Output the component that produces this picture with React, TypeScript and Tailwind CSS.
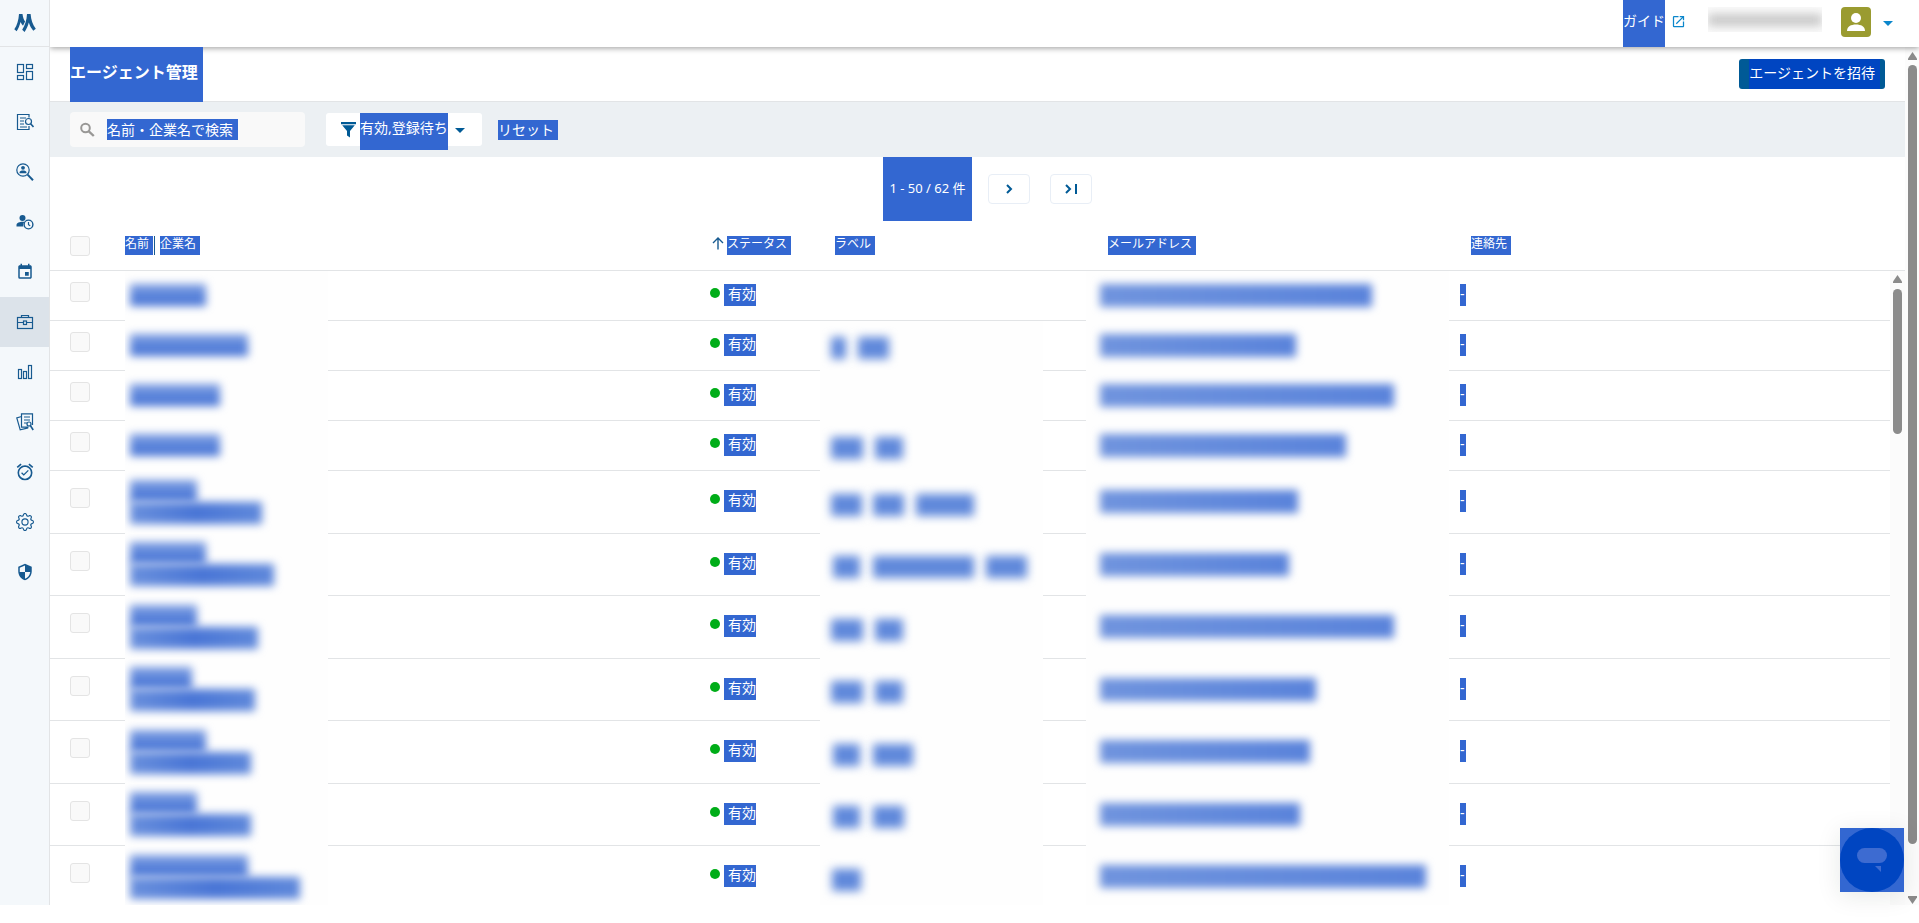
import type { ReactNode } from "react";
import {
  MdArrowDropDown,
  MdEvent,
  MdOpenInNew,
  MdOutlineAlarmOn,
  MdSecurity,
} from "react-icons/md";
import { BsGear } from "react-icons/bs";

const stroke = {
  width: 18,
  height: 18,
  viewBox: "0 0 18 18",
  fill: "none",
  stroke: "currentColor",
  strokeWidth: 1.2,
};

const LogoIcon = () => (
  <svg width="22" height="20" viewBox="0 0 22 20" fill="currentColor">
    <path d="M5 1h3.500c.4 3 1.200 5.500 2.600 7.600L9 12.800C7.900 11.600 7.200 10.400 6.600 9 5.600 12.500 4.400 15.500 2.600 18.300L.3 16.300C3 12.500 4.600 7 5 1z" />
    <path d="M13 1h3.600c.5 6 2 10.500 5.200 14.800l-2.500 2c-2.100-2.400-3.500-5-4.500-8.200-1 3.700-2.300 6.600-4.200 9.400l-2.400-2.200C11 12.500 12.700 7 13 1z" />
  </svg>
);

const DashboardIcon = () => (
  <svg {...stroke}>
    <rect x="1.500" y="1.500" width="6" height="8" />
    <rect x="10.500" y="1.500" width="6" height="4" />
    <rect x="1.500" y="12.500" width="6" height="4" />
    <rect x="10.500" y="8.500" width="6" height="8" />
  </svg>
);

const JobSearchIcon = () => (
  <svg {...stroke}>
    <path d="M13 4.500v-3H1.500v15H13v-3.500M4 5h6M4 8h4M4 11h4M4 14h7" />
    <circle cx="12.500" cy="8.500" r="3" />
    <path d="M14.600 10.800 17.500 14" strokeWidth="1.600" />
  </svg>
);

const PersonSearchIcon = () => (
  <svg {...stroke}>
    <circle cx="7" cy="7" r="6.200" />
    <circle cx="7" cy="4.800" r="1.900" fill="currentColor" stroke="none" />
    <path d="M3.500 10.200V9.500C3.500 8 5.500 7.500 7 7.500s3.500.5 3.500 2v.7z" fill="currentColor" stroke="none" />
    <path d="m11.600 11.600 5.400 5.600" strokeWidth="2" />
  </svg>
);

const PersonClockIcon = () => (
  <svg {...stroke}>
    <circle cx="6.500" cy="5" r="3" fill="currentColor" stroke="none" />
    <path d="M.5 13.500V12c0-2.300 3.500-3.300 6-3.300.8 0 1.300.1 2 .2-1.300 1.300-1.600 3-1.200 4.600z" fill="currentColor" stroke="none" />
    <circle cx="12.500" cy="11.500" r="4.400" strokeWidth="1.400" />
    <path d="M12.500 9v2.700l1.700 1" />
  </svg>
);

const BriefcaseIcon = () => (
  <svg {...stroke}>
    <rect x="1.500" y="4.500" width="15" height="11" />
    <path d="M5.500 4.500v-2h7v2M1.500 9.500h5.500M11 9.500h5.500" />
    <rect x="7.500" y="8" width="3" height="3.500" />
  </svg>
);

const ChartIcon = () => (
  <svg {...stroke}>
    <rect x="2.500" y="6.500" width="3" height="9" />
    <rect x="7.500" y="8.500" width="3" height="7" />
    <rect x="12.500" y="2.500" width="3" height="13" />
  </svg>
);

const ReportIcon = () => (
  <svg {...stroke}>
    <path d="M16.500 12V.8h-11v13.400h7M5.500 3.500.8 4.800l3.400 12 8-2M8 4h6M8 7h6M8 10h3" />
    <circle cx="13" cy="11" r="2" />
    <path d="m14.500 12.800 2.700 4.200" strokeWidth="1.600" />
  </svg>
);

const FilterIcon = () => (
  <svg width="15" height="16" viewBox="0 0 15 16" fill="currentColor">
    <path d="M0 0h15v2.200H0zM1.200 3.300h12.600L9 9v6.500l-3-2V9z" />
  </svg>
);

const SearchIcon = () => (
  <svg width="15" height="15" viewBox="0 0 15 15" fill="none" stroke="currentColor" strokeWidth="2">
    <circle cx="5.500" cy="6" r="4.300" />
    <path d="m8.800 9.300 5 4.700" strokeWidth="2.400" />
  </svg>
);

const navItems = [
  { label: "ダッシュボード", icon: <DashboardIcon /> },
  { label: "求人", icon: <JobSearchIcon /> },
  { label: "候補者検索", icon: <PersonSearchIcon /> },
  { label: "選考", icon: <PersonClockIcon /> },
  { label: "カレンダー", icon: <MdEvent size={18} /> },
  { label: "エージェント", icon: <BriefcaseIcon />, active: true },
  { label: "分析", icon: <ChartIcon /> },
  { label: "レポート", icon: <ReportIcon /> },
  { label: "リマインダー", icon: <MdOutlineAlarmOn size={20} /> },
  { label: "設定", icon: <BsGear size={18} /> },
  { label: "セキュリティ", icon: <MdSecurity size={18} /> },
];

// Widths of the masked values; labels are [left offset, width] pairs.
const agents = [
  { height: "h-[50px]", name: [76], labels: [], email: 272 },
  { height: "h-[50px]", name: [118], labels: [[11, 15], [38, 31]], email: 196 },
  { height: "h-[50px]", name: [90], labels: [], email: 294 },
  { height: "h-[50px]", name: [90], labels: [[11, 32], [55, 28]], email: 246 },
  { height: "h-[63px]", name: [67, 132], labels: [[11, 31], [53, 31], [96, 58]], email: 198 },
  { height: "h-[62px]", name: [76, 144], labels: [[13, 27], [53, 101], [166, 41]], email: 189 },
  { height: "h-[63px]", name: [67, 128], labels: [[11, 32], [55, 28]], email: 294 },
  { height: "h-[62px]", name: [62, 125], labels: [[11, 32], [55, 28]], email: 216 },
  { height: "h-[63px]", name: [76, 121], labels: [[13, 27], [53, 40]], email: 210 },
  { height: "h-[62px]", name: [67, 121], labels: [[13, 27], [53, 31]], email: 200 },
  { height: "h-[63px]", name: [118, 170], labels: [[12, 29]], email: 326 },
];

function Mark({ children, className = "" }: { children: ReactNode; className?: string }) {
  return <span className={`bg-[#3367d1] text-white whitespace-nowrap ${className}`}>{children}</span>;
}

function HeadMark({ children }: { children: ReactNode }) {
  return <Mark className="block h-[19px] w-fit pr-1 text-xs leading-4">{children}</Mark>;
}

function Checkbox({ label }: { label: string }) {
  return (
    <input
      type="checkbox"
      aria-label={label}
      className="block size-5 appearance-none rounded-[3px] border border-[#e4e4e4] bg-[#f9f9f9] checked:bg-[#005a96]"
    />
  );
}

function Sidebar() {
  return (
    <aside className="relative z-20 w-[50px] shrink-0 border-r border-[#e2e4e6] bg-[#f4f8fb] text-[#175a90]">
      <a href="#home" aria-label="ホーム" className="flex h-[47px] items-center justify-center border-b border-[#e2e4e6]">
        <LogoIcon />
      </a>
      <nav>
        {navItems.map((item) => (
          <a
            key={item.label}
            href="#nav"
            aria-label={item.label}
            className={`flex h-[50px] items-center justify-center ${item.active ? "bg-[#dce3ea]" : ""}`}
          >
            {item.icon}
          </a>
        ))}
      </nav>
    </aside>
  );
}

function Header() {
  return (
    <header className="relative z-10 flex h-[47px] shrink-0 items-center justify-end bg-white pr-[26px] shadow-[0_1px_6px_rgba(0,0,0,0.4)]">
      <a href="#guide" className="flex items-center gap-1.5 text-sm text-[#0b86cb]">
        <Mark className="h-[47px] leading-[41px]">ガイド</Mark>
        <MdOpenInNew size={15} className="mb-1" />
      </a>
      <div className="mr-[19px] mb-2 ml-[22px] flex h-[25px] w-[114px] items-center overflow-hidden bg-[#fbfbfb]">
        <div className="h-3 w-full bg-[#c8c8c8] blur-[5px]" />
      </div>
      <button aria-label="アカウント" className="flex items-center gap-3 text-[#0b86cb]">
        <span className="mb-[3px] flex size-[30px] items-center justify-center rounded bg-[#9a9b30] text-white">
          <svg width="18" height="20" viewBox="0 0 18 20" fill="currentColor">
            <circle cx="9" cy="6" r="5" />
            <path d="M0 19c0-4.500 4-6.500 9-6.500s9 2 9 6.500z" />
          </svg>
        </span>
        <svg width="10" height="5" viewBox="0 0 10 5" fill="currentColor">
          <path d="M0 0h10L5 5z" />
        </svg>
      </button>
    </header>
  );
}

function Toolbar() {
  return (
    <>
      <div className="flex h-[55px] shrink-0 items-center justify-between border-b border-[#e2e4e6] pr-5 pl-5">
        <h1 className="relative z-20 mt-px h-[55px] bg-[#3367d1] pr-[5px] text-base leading-[51px] font-bold text-white">
          エージェント管理
        </h1>
        <button className="h-[30px] rounded-[3px] bg-[#005a96] pr-[5px] pl-2.5 text-sm text-white">
          <span className="block h-full bg-[#0045c1] pr-[5px] leading-7">エージェントを招待</span>
        </button>
      </div>
      <div className="flex h-[55px] shrink-0 items-center bg-[#ecf0f3] pl-5">
        <label className="flex h-[35px] w-[235px] items-center gap-3 rounded bg-[#f9f9f9] pl-2.5 text-[#999896]">
          <SearchIcon />
          <input
            type="text"
            aria-label="名前・企業名で検索"
            placeholder="名前・企業名で検索"
            className="h-[21px] w-[131px] bg-[#3367d1] text-sm text-white outline-none placeholder:text-white placeholder:opacity-100"
          />
        </label>
        <button className="ml-[21px] flex h-[33px] w-[156px] items-center rounded-[3px] bg-white pl-[15px] text-[#005a96]">
          <FilterIcon />
          <Mark className="-mb-1 ml-1 h-[37px] text-sm leading-[30px]">有効,登録待ち</Mark>
          <MdArrowDropDown size={24} />
        </button>
        <button className="ml-4 bg-[#3367d1] pr-1 text-sm leading-5 text-white">リセット</button>
      </div>
    </>
  );
}

function Pagination() {
  return (
    <div className="flex h-16 shrink-0 items-center justify-center pl-5">
      <Mark className="flex h-16 w-[89px] items-center justify-center text-[13px]">1 - 50 / 62 件</Mark>
      <button aria-label="次のページ" className="ml-4 flex h-[30px] w-[42px] items-center justify-center rounded border border-[#e8eef6] text-[#005a96]">
        <svg width="12" height="12" viewBox="0 0 12 12" fill="none" stroke="currentColor" strokeWidth="2">
          <path d="m4 2 4 4-4 4" />
        </svg>
      </button>
      <button aria-label="最後のページ" className="ml-5 flex h-[30px] w-[42px] items-center justify-center rounded border border-[#e8eef6] text-[#005a96]">
        <svg width="14" height="12" viewBox="0 0 14 12" fill="none" stroke="currentColor" strokeWidth="2">
          <path d="m2 2 4 4-4 4M12 1v10" />
        </svg>
      </button>
    </div>
  );
}

function AgentTable() {
  return (
    <div className="relative min-h-0 flex-1 overflow-hidden">
      <table className="w-full table-fixed border-separate border-spacing-0 text-left">
        <colgroup>
          <col className="w-[75px]" />
          <col className="w-[585px]" />
          <col className="w-[110px]" />
          <col className="w-[266px]" />
          <col className="w-[363px]" />
          <col />
        </colgroup>
        <thead>
          <tr className="h-[50px] *:border-b *:border-[#e2e4e6] *:p-0 *:pt-[15px] *:align-top *:leading-none *:font-normal">
            <th className="pl-5!">
              <Checkbox label="すべて選択" />
            </th>
            <th>
              <div className="flex">
                <HeadMark>名前</HeadMark>
                <span className="mx-px mr-[5px] w-px bg-[#175a90]" />
                <HeadMark>企業名</HeadMark>
              </div>
            </th>
            <th>
              <div className="flex">
                <svg width="17" height="16" viewBox="0 0 17 16" fill="none" stroke="#175a90" strokeWidth="1.400">
                  <path d="M8 13.500V2M3 7l5-5 5 5" />
                </svg>
                <HeadMark>ステータス</HeadMark>
              </div>
            </th>
            <th className="pl-[15px]!">
              <HeadMark>ラベル</HeadMark>
            </th>
            <th className="pl-[22px]!">
              <HeadMark>メールアドレス</HeadMark>
            </th>
            <th className="pl-[22px]!">
              <HeadMark>連絡先</HeadMark>
            </th>
          </tr>
        </thead>
        <tbody>
          {agents.map((agent, index) => (
            <tr key={index} className={`${agent.height} *:border-b *:border-[#e2e4e6] *:p-0 *:pb-0.5`}>
              <td className="pb-2! pl-5!">
                <Checkbox label={`${index + 1}行目を選択`} />
              </td>
              <td className="relative">
                <div className="absolute top-0 -bottom-px left-0 flex w-[203px] flex-col justify-center overflow-hidden bg-[#fefefe] pb-0.5 pl-[5px]">
                  {agent.name.map((width, line) => (
                    <div
                      key={line}
                      className={`h-[22px] blur-[4px] ${line ? "bg-linear-to-r from-[#6a90dd] via-[#4a76d6] to-[#6089db]" : "bg-linear-to-b from-[#7f9fe2] to-[#3f6ed4]"}`}
                      style={{ width }}
                    />
                  ))}
                </div>
              </td>
              <td>
                <div className="flex items-center">
                  <span className="mr-1 mb-1 size-2.5 rounded-full bg-[#00ad18]" />
                  <Mark className="h-[22px] w-8 pl-1 text-sm leading-5">有効</Mark>
                </div>
              </td>
              <td className="relative">
                {index > 0 && (
                  <div className="absolute top-0 -bottom-px left-0 w-[223px] overflow-hidden bg-[#fefefe]">
                    {agent.labels.map(([left, width]) => (
                      <div
                        key={left}
                        className="absolute top-1/2 -mt-[9px] h-[22px] bg-[#6089db] blur-[5px]"
                        style={{ left, width }}
                      />
                    ))}
                  </div>
                )}
              </td>
              <td className="relative">
                <div className="absolute inset-x-0 top-0 -bottom-px flex items-center overflow-hidden bg-[#fefefe] pb-0.5 pl-3.5">
                  <div
                    className="h-[23px] bg-linear-to-r from-[#7094de] to-[#5a83db] blur-[4px]"
                    style={{ width: agent.email }}
                  />
                </div>
              </td>
              <td className="pl-[11px]!">
                <Mark className="block h-[22px] w-1.5 text-sm leading-5">-</Mark>
              </td>
            </tr>
          ))}
        </tbody>
      </table>
      {/* list scrollbar */}
      <div className="absolute top-[50px] right-0 bottom-0 flex w-[15px] flex-col items-center bg-[#fbfbfb] pt-1">
        <svg width="9" height="8" viewBox="0 0 9 8" fill="#8b8b8b">
          <path d="M4.500 0 9 6.500V8H0V6.500z" />
        </svg>
        <div className="mt-1.5 h-[145px] w-[9px] rounded-full bg-[#8b8b8b]" />
      </div>
    </div>
  );
}

function PageScrollbar() {
  return (
    <div className="flex w-3.5 shrink-0 flex-col items-center bg-[#fcfcfc] pt-[5px] pb-px">
      <svg width="9" height="8" viewBox="0 0 9 8" fill="#8b8b8b">
        <path d="M4.500 0 9 6.500V8H0V6.500z" />
      </svg>
      <div className="mt-[5px] mb-[52px] w-[9px] flex-1 rounded-full bg-[#8b8b8b]" />
      <svg width="9" height="8" viewBox="0 0 9 8" fill="#8b8b8b">
        <path d="M4.500 8 9 1.500V0H0v1.500z" />
      </svg>
    </div>
  );
}

export default function App() {
  return (
    <div
      lang="ja"
      className="flex h-screen overflow-hidden bg-white pb-[18px] font-['Noto_Sans','Noto_Sans_CJK_JP',sans-serif]"
    >
      <Sidebar />
      <div className="flex min-w-0 flex-1 flex-col">
        <Header />
        <div className="flex min-h-0 flex-1">
          <main className="flex min-w-0 flex-1 flex-col">
            <Toolbar />
            <Pagination />
            <AgentTable />
          </main>
          <PageScrollbar />
        </div>
      </div>
      <button
        aria-label="チャットを開く"
        className="fixed right-[15px] bottom-[31px] z-30 bg-[#3367d1] shadow-[0_4px_24px_rgba(0,40,30,0.1)]"
      >
        <span className="flex size-16 items-center justify-center rounded-full bg-[#0045c1]">
          <svg width="30" height="26" viewBox="0 0 30 26" fill="#3d6bd1">
            <rect y="1" width="30" height="15" rx="7.500" />
            <path d="M18 19h6v6z" />
          </svg>
        </span>
      </button>
    </div>
  );
}
